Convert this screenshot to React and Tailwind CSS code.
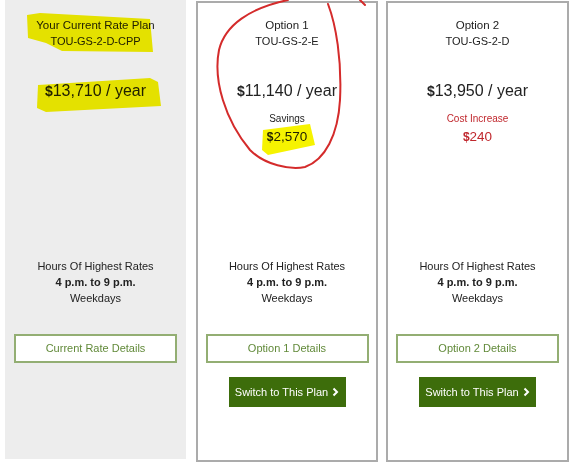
import React from 'react';

const plans = [
  {
    key: 'current',
    title: 'Your Current Rate Plan',
    code: 'TOU-GS-2-D-CPP',
    price: '13,710',
    details: 'Current Rate Details',
  },
  {
    key: 'opt1',
    title: 'Option 1',
    code: 'TOU-GS-2-E',
    price: '11,140',
    deltaLabel: 'Savings',
    delta: '2,570',
    details: 'Option 1 Details',
    switchable: true,
  },
  {
    key: 'opt2',
    title: 'Option 2',
    code: 'TOU-GS-2-D',
    price: '13,950',
    deltaLabel: 'Cost Increase',
    delta: '240',
    increase: true,
    details: 'Option 2 Details',
    switchable: true,
  },
];

function PlanBody({ plan, topPad }) {
  return (
    <div className="flex flex-col items-center text-center text-[#222]">
      {/* top block */}
      <div className={`flex flex-col items-center w-full ${topPad}`}>
        <div className="text-[11.5px] leading-[16px]">{plan.title}</div>
        <div className="text-[11px] leading-[16px]">{plan.code}</div>
        <div className="mt-[31px] text-[16px] leading-[22px]">
          <span className="font-bold text-[14px]">$</span>
          {plan.price} / year
        </div>
        {plan.deltaLabel && (
          <>
            <div
              className={`mt-[10px] text-[10px] leading-[14px] ${
                plan.increase ? 'text-[#c0272d]' : 'text-[#222]'
              }`}
            >
              {plan.deltaLabel}
            </div>
            <div
              className={`mt-[2px] text-[13.5px] leading-[18px] ${
                plan.increase ? 'text-[#c0272d]' : 'text-[#222]'
              }`}
            >
              <span className="font-bold text-[12px]">$</span>
              {plan.delta}
            </div>
          </>
        )}
      </div>

      <div className="text-[11px] leading-[16px]">
        <div>Hours Of Highest Rates</div>
        <div className="font-bold">4 p.m. to 9 p.m.</div>
        <div>Weekdays</div>
      </div>

      <button className="mt-[28px] w-[163px] h-[29px] border-2 border-[#93ae73] bg-white text-[#628a3a] text-[11px]">
        {plan.details}
      </button>

      {plan.switchable && (
        <button className="mt-[14px] w-[117px] h-[30px] bg-[#3d6d0b] text-white text-[11px] flex items-center justify-center gap-[4px]">
          <span>Switch to This Plan</span>
          <svg width="7" height="10" viewBox="0 0 7 10">
            <polyline points="1.5,1.5 5,5 1.5,8.5" fill="none" stroke="white" strokeWidth="2" />
          </svg>
        </button>
      )}
    </div>
  );
}

export default function App() {
  return (
    <div
      className="relative w-[581px] h-[469px] bg-white overflow-hidden"
      style={{ fontFamily: '"Liberation Sans", Arial, sans-serif' }}
    >
      <div className="flex items-start pl-[5px]">
        <div className="w-[181px] h-[459px] bg-[#ededed]">
          <PlanBody plan={plans[0]} topPad="pt-[17px] h-[258px]" />
        </div>
        <div className="ml-[10px] mt-px w-[182px] h-[461px] border-2 border-[#ababab] bg-white">
          <PlanBody plan={plans[1]} topPad="pt-[14px] h-[255px]" />
        </div>
        <div className="ml-[8px] mt-px w-[183px] h-[461px] border-2 border-[#ababab] bg-white">
          <PlanBody plan={plans[2]} topPad="pt-[14px] h-[255px]" />
        </div>
      </div>

      {/* highlighter + pen annotations */}
      <svg
        className="absolute inset-0 pointer-events-none mix-blend-multiply"
        width="581"
        height="469"
        viewBox="0 0 581 469"
      >
        <path
          d="M27 15 L40 13 L150 19 L153 52 L62 51 L46 43 L28 38 Z"
          fill="#f6f300"
        />
        <path
          d="M38 85 L150 78 L158 82 L161 106 L46 112 L37 108 Z"
          fill="#f6f300"
        />
        <path d="M263 130 L310 124 L315 145 L268 155 L262 150 Z" fill="#f6f300" />
      </svg>
      <svg
        className="absolute inset-0 pointer-events-none"
        width="581"
        height="469"
        viewBox="0 0 581 469"
      >
        <path
          d="M288 0 C250 8, 225 25, 219 50 C213 80, 225 120, 250 150 C265 165, 290 170, 305 167 C325 160, 338 135, 340 100 C342 60, 336 25, 328 4"
          fill="none"
          stroke="#d42b2b"
          strokeWidth="2"
          strokeLinecap="round"
        />
        <path d="M360 0 L365 5" stroke="#d42b2b" strokeWidth="2" strokeLinecap="round" />
      </svg>
    </div>
  );
}
